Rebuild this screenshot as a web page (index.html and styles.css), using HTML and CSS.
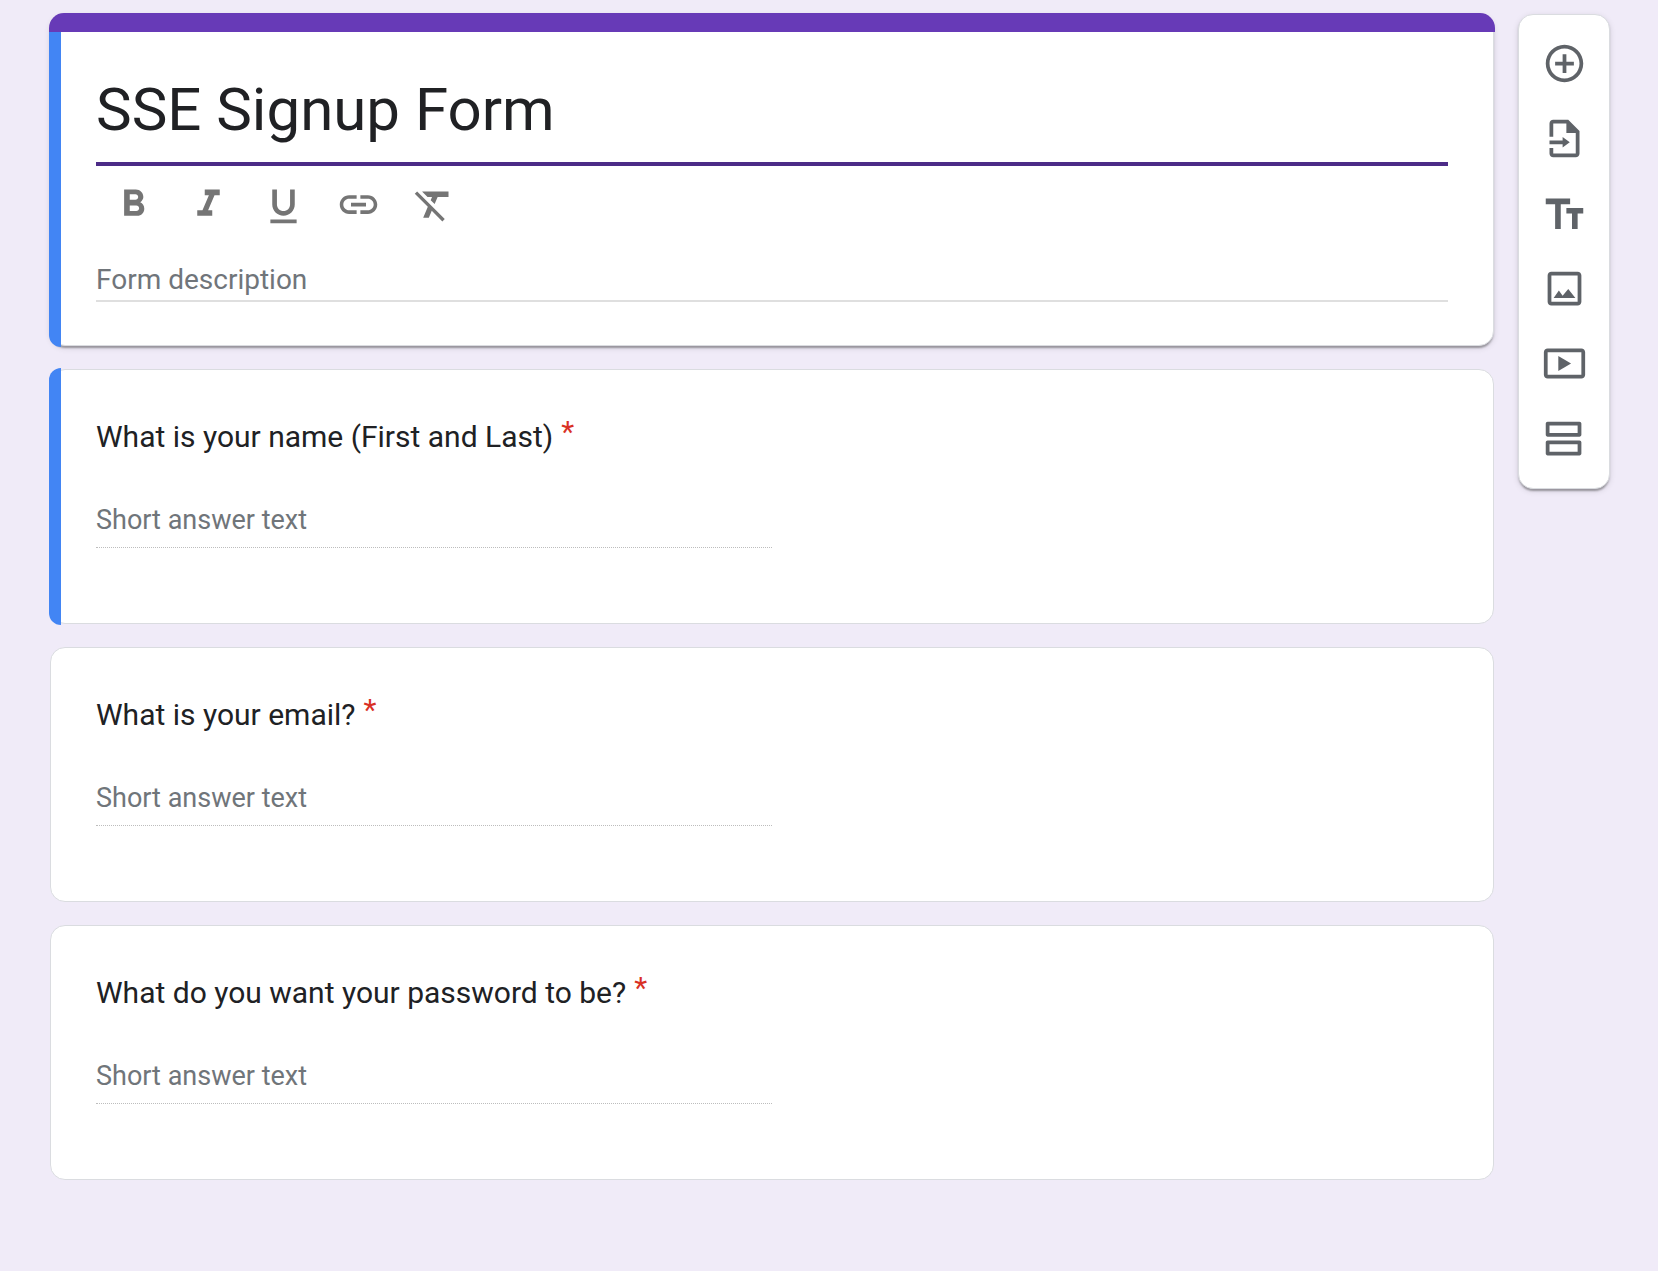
FILE: index.html
```html
<!DOCTYPE html>
<html lang="en">
<head>
<meta charset="utf-8">
<meta name="viewport" content="width=device-width, initial-scale=1">
<title>SSE Signup Form</title>
<link rel="stylesheet" href="styles.css">
</head>
<body>
<div class="page">
  <main class="form">
    <section class="card card-header">
      <input class="title" type="text" value="SSE Signup Form" aria-label="Form title">
      <div class="format-bar" role="toolbar" aria-label="Text formatting">
        <button class="format-button" type="button" aria-label="Bold"><svg class="icon" viewBox="0 0 24 24"><path d="M15.6 10.79c.97-.67 1.65-1.77 1.65-2.79 0-2.26-1.75-4-4-4H7v14h7.04c2.09 0 3.71-1.7 3.71-3.79 0-1.52-.86-2.82-2.15-3.42zM10 6.5h3c.83 0 1.5.67 1.5 1.5s-.67 1.5-1.5 1.5h-3v-3zm3.5 9H10v-3h3.5c.83 0 1.5.67 1.5 1.5s-.67 1.5-1.5 1.5z"/></svg></button>
        <button class="format-button" type="button" aria-label="Italic"><svg class="icon" viewBox="0 0 24 24"><path d="M10 4v3h2.21l-3.42 8H6v3h8v-3h-2.21l3.42-8H18V4z"/></svg></button>
        <button class="format-button" type="button" aria-label="Underline"><svg class="icon" viewBox="0 -1 24 24"><path d="M12 17c3.31 0 6-2.69 6-6V3h-2.500v8c0 1.930-1.570 3.500-3.500 3.500S8.500 12.930 8.500 11V3H6v8c0 3.310 2.690 6 6 6zm-7 2v2h14v-2H5z"/></svg></button>
        <button class="format-button" type="button" aria-label="Insert link"><svg class="icon" viewBox="0 0 24 24"><path d="M3.900 12c0-1.710 1.390-3.100 3.100-3.100h4V7H7c-2.760 0-5 2.240-5 5s2.240 5 5 5h4v-1.900H7c-1.710 0-3.100-1.390-3.100-3.100zM8 13h8v-2H8v2zm9-6h-4v1.900h4c1.710 0 3.100 1.390 3.100 3.100s-1.390 3.100-3.100 3.100h-4V17h4c2.760 0 5-2.240 5-5s-2.240-5-5-5z"/></svg></button>
        <button class="format-button" type="button" aria-label="Remove formatting"><svg class="icon" viewBox="0 0 24 24"><path d="M3.270 5L2 6.270l6.970 6.970L6.500 19h3l1.570-3.660L16.730 21 18 19.730 3.550 5.270 3.270 5zM6 5v.18L8.820 8h2.400l-.72 1.680 2.100 2.100L14.210 8H20V5H6z"/></svg></button>
      </div>
      <input class="description" type="text" placeholder="Form description" aria-label="Form description">
    </section>

    <section class="card card-question card-selected">
      <label class="question" for="answer-name">What is your name (First and Last) <span class="required">*</span></label>
      <input class="answer" id="answer-name" type="text" placeholder="Short answer text">
    </section>

    <section class="card card-question">
      <label class="question" for="answer-email">What is your email? <span class="required">*</span></label>
      <input class="answer" id="answer-email" type="text" placeholder="Short answer text">
    </section>

    <section class="card card-question">
      <label class="question" for="answer-password">What do you want your password to be? <span class="required">*</span></label>
      <input class="answer" id="answer-password" type="text" placeholder="Short answer text">
    </section>
  </main>

  <aside class="tools" role="toolbar" aria-label="Add to form">
    <button class="tool-button" type="button" aria-label="Add question"><svg class="icon" viewBox="0 0 24 24"><path d="M13 7h-2v4H7v2h4v4h2v-4h4v-2h-4V7zm-1-5C6.480 2 2 6.480 2 12s4.480 10 10 10 10-4.480 10-10S17.520 2 12 2zm0 18c-4.410 0-8-3.590-8-8s3.590-8 8-8 8 3.590 8 8-3.590 8-8 8z"/></svg></button>
    <button class="tool-button" type="button" aria-label="Import questions"><svg class="icon" viewBox="0 0 24 24"><path d="M14 2H6c-1.100 0-2 .9-2 2v7h2V4h7v5h5v11H6v-3H4v3c0 1.100.9 2 2 2h12c1.100 0 2-.9 2-2V8l-6-6z"/><path d="M4 13h7v-1.800l3.800 2.800-3.800 2.800V15H4z"/></svg></button>
    <button class="tool-button" type="button" aria-label="Add title and description"><svg class="icon" viewBox="0 0 24 24"><path d="M2 4v3h5v13.300h3V7h5V4H2zM22 9h-9v3h3v8.300h3V12h3V9z"/></svg></button>
    <button class="tool-button" type="button" aria-label="Add image"><svg class="icon" viewBox="0 0 24 24"><path d="M19 5v14H5V5h14m0-2H5c-1.100 0-2 .9-2 2v14c0 1.100.9 2 2 2h14c1.100 0 2-.9 2-2V5c0-1.100-.9-2-2-2z"/><path d="M6.200 17h11.600L14 12.200l-3 3.600L9 13z"/></svg></button>
    <button class="tool-button" type="button" aria-label="Add video"><svg class="icon" viewBox="0 0 24 24"><path d="M21 4H3c-1.100 0-2 .9-2 2v12c0 1.100.9 2 2 2h18c1.100 0 2-.9 2-2V6c0-1.100-.9-2-2-2zm0 14H3V6h18v12z"/><path d="M8.700 8v8l6.800-4z"/></svg></button>
    <button class="tool-button" type="button" aria-label="Add section"><svg class="icon" viewBox="0 0 24 24"><path d="M20 3H3c-.55 0-1 .45-1 1v6c0 .55.45 1 1 1h17c.55 0 1-.45 1-1V4c0-.55-.45-1-1-1zm-1 6H4V5h15v4zM20 13H3c-.55 0-1 .45-1 1v6c0 .55.45 1 1 1h17c.55 0 1-.45 1-1v-6c0-.55-.45-1-1-1zm-1 6H4v-4h15v4z"/></svg></button>
  </aside>
</div>
</body>
</html>
```
FILE: styles.css
```css
* {
  box-sizing: border-box;
}

body {
  margin: 0;
  background: #f0ebf8;
  color: #202124;
  font-family: Roboto, "Liberation Sans", sans-serif;
}

.page {
  display: flex;
  align-items: flex-start;
  gap: 24px;
  padding: 14px 48px 90px 50px;
}

.form {
  flex: 1;
  min-width: 0;
  display: flex;
  flex-direction: column;
  gap: 23px;
}

.card {
  position: relative;
  display: flex;
  flex-direction: column;
  align-items: flex-start;
  background: #fff;
  border: 1px solid #dadce0;
  border-radius: 15px;
}

.card-header {
  padding: 54px 45px 43px;
}

.card-header,
.tools {
  box-shadow: 0 2px 2px rgba(0, 0, 0, 0.14), 0 4px 2px -2px rgba(0, 0, 0, 0.2), 0 2px 6px rgba(0, 0, 0, 0.12);
}

.card-question {
  padding: 44px 45px 75px;
}

/* Blue strip that marks the active card */
.card-header::before,
.card-selected::before {
  content: "";
  position: absolute;
  inset: -2px auto -2px -2px;
  width: 12px;
  background: #4285f4;
  border-radius: 15px 0 0 15px;
}

/* In the header the strip starts below the colour band */
.card-header::before {
  top: 17px;
  border-radius: 0 0 0 15px;
}

/* Theme colour band across the form header */
.card-header::after {
  content: "";
  position: absolute;
  inset: -2px -2px auto;
  height: 19px;
  background: #673ab7;
  border-radius: 15px 15px 0 0;
}

input {
  padding: 0;
  border: 0;
  outline: 0;
  background: transparent;
  color: inherit;
  font-family: inherit;
}

input::placeholder {
  color: #70757a;
  opacity: 1;
}

.title {
  width: 100%;
  height: 97px;
  padding-bottom: 13px;
  border-bottom: 4px solid #4c2b87;
  font-size: 60px;
  line-height: 80px;
}

.format-bar {
  display: flex;
  padding: 16px 0 33px;
  color: #757575;
}

button {
  display: flex;
  align-items: center;
  justify-content: center;
  padding: 0;
  border: 0;
  background: transparent;
  color: inherit;
  cursor: pointer;
}

.format-button {
  width: 75px;
  height: 45px;
}

.icon {
  width: 45px;
  height: 45px;
  fill: currentColor;
}

.description {
  width: 100%;
  height: 42px;
  padding-bottom: 2px;
  border-bottom: 2px solid #dfdfdf;
  font-size: 28px;
  line-height: 38px;
}

.question {
  display: flex;
  gap: 8px;
  margin-bottom: 43px;
  font-size: 30px;
  line-height: 45px;
}

.required {
  color: #d93025;
  line-height: 35px;
}

.answer {
  width: 50%;
  height: 46px;
  padding-bottom: 9px;
  border-bottom: 1px dotted #bdbdbd;
  font-size: 27px;
  line-height: 36px;
}

.tools {
  width: 92px;
  padding: 11px 0 12px;
  background: #fff;
  border: 1px solid #dadce0;
  border-radius: 15px;
  color: #5f6368;
}

.tool-button {
  width: 100%;
  height: 75px;
}
```
